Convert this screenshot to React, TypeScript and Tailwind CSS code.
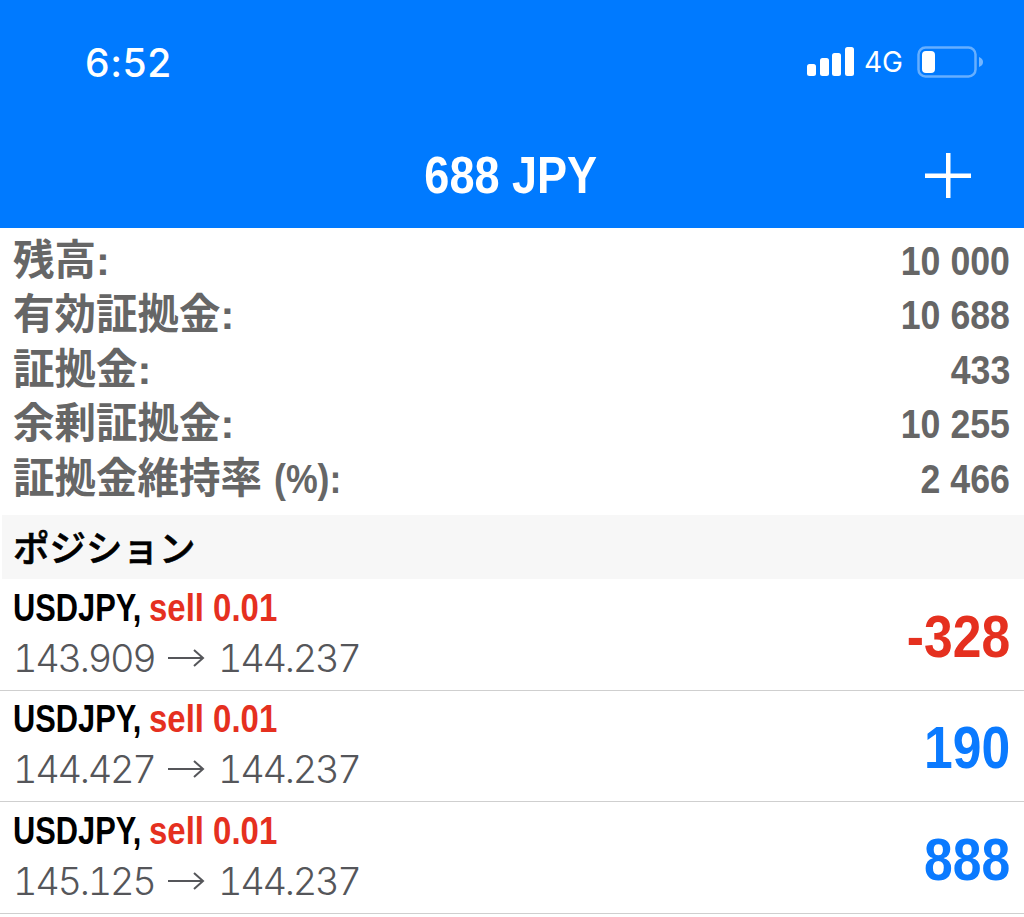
import React from "react";

const sans = "font-['Liberation_Sans','Noto_Sans_CJK_JP',sans-serif]";

const stats = [
  { label: "残高:", value: "10 000" },
  { label: "有効証拠金:", value: "10 688" },
  { label: "証拠金:", value: "433" },
  { label: "余剰証拠金:", value: "10 255" },
  { label: "証拠金維持率", suffix: "(%):", value: "2 466" },
];

const positions = [
  { open: "143.909", profit: "-328", color: "text-[#e5301f]" },
  { open: "144.427", profit: "190", color: "text-[#0a7aff]" },
  { open: "145.125", profit: "888", color: "text-[#0a7aff]" },
];

function Signal() {
  return (
    <svg width="47" height="30" viewBox="0 0 47 30" fill="white">
      <rect x="0" y="17" width="9" height="12" rx="2.5" />
      <rect x="13" y="11" width="9" height="18" rx="2.5" />
      <rect x="25" y="6" width="9" height="23" rx="2.5" />
      <rect x="38" y="0" width="9" height="29" rx="2.5" />
    </svg>
  );
}

function Battery() {
  return (
    <svg width="66" height="32" viewBox="0 0 66 32">
      <rect x="1.5" y="1.5" width="57" height="29" rx="7" fill="none" stroke="#ffffff" strokeOpacity="0.4" strokeWidth="2.5" />
      <rect x="5" y="5" width="13" height="22" rx="4" fill="white" />
      <path d="M62 11 C65 12 66 14 66 16 C66 18 65 20 62 21 Z" fill="#ffffff" fillOpacity="0.45" />
    </svg>
  );
}

export default function App() {
  return (
    <div className={`w-[1024px] h-[917px] overflow-hidden bg-white ${sans}`}>
      <header className="h-[228px] bg-[#007aff] text-white flex flex-col">
        <div className="h-[124px] flex items-center justify-between pl-[85px] pr-[41px]">
          <span className="text-[39px] leading-none font-['Inter',sans-serif] font-medium tracking-[0.6px]">6:52</span>
          <div className="flex items-center">
            <Signal />
            <span className="ml-[10px] text-[28px] leading-none font-['Inter',sans-serif]">4G</span>
            <span className="ml-[14px] flex"><Battery /></span>
          </div>
        </div>
        <div className="relative flex-1 flex items-center justify-center pb-[3px]">
          <span className="text-[52px] leading-none font-bold scale-x-[0.866] ml-[-3px]">688 JPY</span>
          <svg className="absolute left-[925px] top-[29px]" width="46" height="46" viewBox="0 0 46 46" fill="white">
            <rect x="21" y="0" width="4.5" height="45" />
            <rect x="0" y="20.5" width="46" height="4.5" />
          </svg>
        </div>
      </header>

      <section className="pt-[5px] h-[287px] pl-[13px] pr-[14px] text-[#666666] font-bold">
        {stats.map((s) => (
          <div key={s.label} className="h-[54.5px] flex items-center justify-between">
            <span className="text-[41.5px] leading-none">
              {s.label}
              {s.suffix && (
                <span className="inline-block ml-[12px] origin-left scale-x-[0.86]">{s.suffix}</span>
              )}
            </span>
            <span className="text-[41.5px] leading-none origin-right scale-x-[0.86]">{s.value}</span>
          </div>
        ))}
      </section>

      <div className="ml-[2px] h-[64px] bg-[#f7f7f7] flex items-center pl-[11px] text-[36.5px] text-black font-['Noto_Sans_CJK_JP',sans-serif] font-medium leading-none [-webkit-text-stroke:0.6px_black]">
        ポジション
      </div>

      <ul>
        {positions.map((p) => (
          <li key={p.open} className="h-[111.5px] pl-[13px] flex items-stretch border-b border-[#cfcfcf]">
            <div className="flex-1 flex flex-col pt-[8px]">
              <div className="h-[40px] flex items-center text-[39px] font-bold leading-none whitespace-nowrap">
                <span className="w-[136px] shrink-0 inline-block origin-left scale-x-[0.79] text-black">USDJPY,</span>
                <span className="inline-block origin-left scale-x-[0.845] text-[#e5301f]">sell 0.01</span>
              </div>
              <div className="mt-[10.5px] h-[40px] flex items-center text-[38px] leading-none text-[#55565a] whitespace-nowrap font-['Inter',sans-serif] font-light tabular-nums tracking-[-2.3px]">
                <span className="w-[142px] shrink-0">{p.open}</span>
                <svg className="ml-[13px] mr-[13px]" width="37" height="20" viewBox="0 0 37 20" fill="none" stroke="#55565a" strokeWidth="2">
                  <path d="M0 10 H35 M26 2 L35 10 L26 18" />
                </svg>
                <span>144.237</span>
              </div>
            </div>
            <div className="flex items-center pr-[14px] pt-[5px]">
              <span className={`text-[60px] leading-none font-bold origin-right scale-x-[0.86] ${p.color}`}>{p.profit}</span>
            </div>
          </li>
        ))}
      </ul>
    </div>
  );
}
